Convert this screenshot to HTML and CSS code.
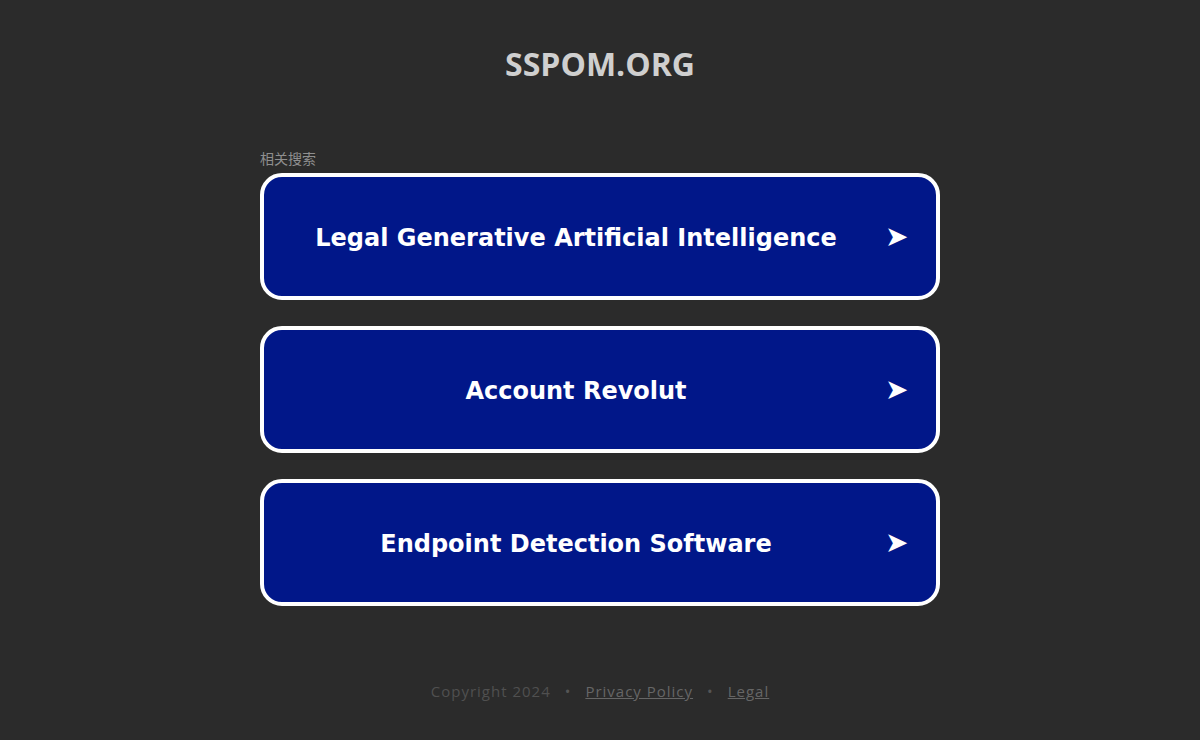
FILE: index.html
```html
<!DOCTYPE html>
<html lang="zh">
<head>
<meta charset="utf-8">
<title>sspom.org</title>
<link rel="stylesheet" href="styles.css">
</head>
<body>
<div class="page">
  <header class="header">
    <h1 class="domain">SSPOM.ORG</h1>
  </header>
  <main class="content">
    <div class="label">相关搜索</div>
    <a class="result" href="#"><span class="result-text">Legal Generative Artificial Intelligence</span><span class="arrow">➤</span></a>
    <a class="result" href="#"><span class="result-text">Account Revolut</span><span class="arrow">➤</span></a>
    <a class="result" href="#"><span class="result-text">Endpoint Detection Software</span><span class="arrow">➤</span></a>
  </main>
  <footer class="footer">
    <span>Copyright 2024</span>
    <span class="dot">•</span>
    <a href="#">Privacy Policy</a>
    <span class="dot">•</span>
    <a href="#">Legal</a>
  </footer>
</div>
</body>
</html>
```
FILE: styles.css
```css
html, body {
  margin: 0;
  padding: 0;
  background: #2b2b2b;
  height: 100%;
}
.page {
  display: flex;
  flex-direction: column;
  align-items: center;
  min-height: 740px;
}
.header {
  padding-top: 44px;
  height: 106px;
  box-sizing: border-box;
}
.domain {
  margin: 0;
  font-family: "Open Sans", sans-serif;
  font-weight: 700;
  font-size: 32px;
  line-height: 40px;
  color: #cfcfcf;
  letter-spacing: 0;
}
.content {
  width: 680px;
  margin-top: 44px;
  display: flex;
  flex-direction: column;
}
.label {
  font-family: "Noto Sans CJK SC", sans-serif;
  font-size: 14px;
  line-height: 16px;
  color: #8f8f8f;
  margin-bottom: 7px;
}
.result {
  display: flex;
  align-items: center;
  height: 127px;
  box-sizing: border-box;
  border: 4px solid #ffffff;
  border-radius: 22px;
  background: #011789;
  color: #ffffff;
  text-decoration: none;
  padding-right: 31px;
  margin-bottom: 26px;
  font-family: "DejaVu Sans", Verdana, sans-serif;
  font-weight: 700;
  font-size: 24px;
}
.result-text {
  flex: 1;
  text-align: center;
  padding-top: 2px;
  padding-left: 3px;
}
.arrow {
  width: 20px;
  font-size: 28px;
  line-height: 28px;
  text-align: center;
  font-family: "DejaVu Sans", sans-serif;
}
.footer {
  margin-top: 49px;
  font-family: "Open Sans", sans-serif;
  font-size: 15px;
  letter-spacing: 1px;
  color: #505050;
  display: flex;
  gap: 14px;
}
.footer a {
  color: #666666;
  text-decoration: underline;
}
.dot {
  color: #555555;
}
```
